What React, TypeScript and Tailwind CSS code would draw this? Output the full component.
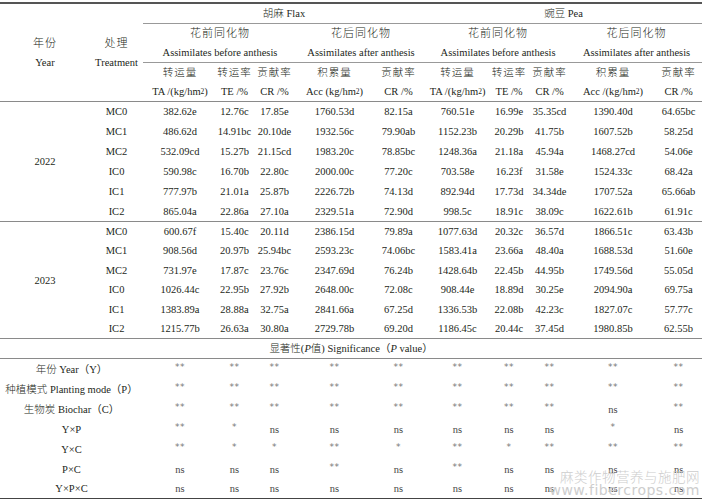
import React from "react";

const font = { fontFamily: '"Liberation Serif", "Noto Sans CJK SC", serif' };

type Row = [string, string, string, string, string, string, string, string, string, string];

const y2022: [string, Row][] = [
  ["MC0", ["382.62e", "12.76c", "17.85e", "1760.53d", "82.15a", "760.51e", "16.99e", "35.35cd", "1390.40d", "64.65bc"]],
  ["MC1", ["486.62d", "14.91bc", "20.10de", "1932.56c", "79.90ab", "1152.23b", "20.29b", "41.75b", "1607.52b", "58.25d"]],
  ["MC2", ["532.09cd", "15.27b", "21.15cd", "1983.20c", "78.85bc", "1248.36a", "21.18a", "45.94a", "1468.27cd", "54.06e"]],
  ["IC0", ["590.98c", "16.70b", "22.80c", "2000.00c", "77.20c", "703.58e", "16.23f", "31.58e", "1524.33c", "68.42a"]],
  ["IC1", ["777.97b", "21.01a", "25.87b", "2226.72b", "74.13d", "892.94d", "17.73d", "34.34de", "1707.52a", "65.66ab"]],
  ["IC2", ["865.04a", "22.86a", "27.10a", "2329.51a", "72.90d", "998.5c", "18.91c", "38.09c", "1622.61b", "61.91c"]],
];

const y2023: [string, Row][] = [
  ["MC0", ["600.67f", "15.40c", "20.11d", "2386.15d", "79.89a", "1077.63d", "20.32c", "36.57d", "1866.51c", "63.43b"]],
  ["MC1", ["908.56d", "20.97b", "25.94bc", "2593.23c", "74.06bc", "1583.41a", "23.66a", "48.40a", "1688.53d", "51.60e"]],
  ["MC2", ["731.97e", "17.87c", "23.76c", "2347.69d", "76.24b", "1428.64b", "22.45b", "44.95b", "1749.56d", "55.05d"]],
  ["IC0", ["1026.44c", "22.95b", "27.92b", "2648.00c", "72.08c", "908.44e", "18.89d", "30.25e", "2094.90a", "69.75a"]],
  ["IC1", ["1383.89a", "28.88a", "32.75a", "2841.66a", "67.25d", "1336.53b", "22.08b", "42.23c", "1827.07c", "57.77c"]],
  ["IC2", ["1215.77b", "26.63a", "30.80a", "2729.78b", "69.20d", "1186.45c", "20.44c", "37.45d", "1980.85b", "62.55b"]],
];

const sig: [string, string, string[]][] = [
  ["年份", " Year（Y）", ["**", "**", "**", "**", "**", "**", "**", "**", "**", "**"]],
  ["种植模式", " Planting mode（P）", ["**", "**", "**", "**", "**", "**", "**", "**", "**", "**"]],
  ["生物炭", " Biochar（C）", ["**", "**", "**", "**", "**", "**", "**", "**", "ns", "**"]],
  ["", "Y×P", ["**", "*", "ns", "ns", "ns", "ns", "ns", "ns", "*", "ns"]],
  ["", "Y×C", ["**", "*", "*", "**", "*", "**", "*", "**", "**", "**"]],
  ["", "P×C", ["ns", "ns", "ns", "**", "ns", "**", "ns", "ns", "ns", "ns"]],
  ["", "Y×P×C", ["ns", "ns", "ns", "ns", "ns", "ns", "ns", "ns", "ns", "ns"]],
];

const widths = [90, 53, 74, 35, 45, 75, 53, 65, 38, 43, 84, 47];

function Sup() {
  return <sup className="text-[7.5px] relative -top-[1px]">2</sup>;
}

function Zh({ children, cls = "" }: { children: React.ReactNode; cls?: string }) {
  return <span className={`font-light ${cls}`}>{children}</span>;
}

function DataBlock({ year, rows, h }: { year: string; rows: [string, Row][]; h: string }) {
  return (
    <>
      {rows.map(([t, vals], i) => (
        <tr key={t} className={`${h} ${i === rows.length - 1 ? "border-b-[1.5px] border-[#8a8a8a]" : ""}`}>
          {i === 0 && (
            <td rowSpan={rows.length} className="text-center align-middle p-0">
              {year}
            </td>
          )}
          <td className="text-center p-0">{t}</td>
          {vals.map((v, j) => (
            <td key={j} className="text-center p-0 whitespace-nowrap">
              {v}
            </td>
          ))}
        </tr>
      ))}
    </>
  );
}

export default function App() {
  return (
    <div className="relative w-[702px] h-[499px] bg-white overflow-hidden text-[#231f20]" style={font}>
      <div className="h-[2px]" />
      <table className="w-[702px] border-collapse table-fixed text-[10.5px] leading-[19px]">
        <colgroup>
          {widths.map((w, i) => (
            <col key={i} style={{ width: w }} />
          ))}
        </colgroup>
        <tbody>
          <tr className="h-[20px] border-t-[2px] border-[#555]">
            <td rowSpan={3} className="p-0 text-center align-middle leading-[19px] border-b-[1.5px] border-[#8a8a8a]">
              <div className="text-[11px] tracking-[1px]"><Zh>年份</Zh></div>
              <div>Year</div>
            </td>
            <td rowSpan={3} className="p-0 text-center align-middle leading-[19px] border-b-[1.5px] border-[#8a8a8a]">
              <div className="text-[11px] tracking-[1px]"><Zh>处理</Zh></div>
              <div>Treatment</div>
            </td>
            <td colSpan={5} className="p-0 text-center border-b border-[#999]">
              <Zh cls="text-[10.5px]">胡麻</Zh> Flax
            </td>
            <td colSpan={5} className="p-0 text-center border-b border-[#999]">
              <Zh cls="text-[10.5px]">豌豆</Zh> Pea
            </td>
          </tr>
          <tr className="h-[38px]">
            {[3, 2, 3, 2].map((span, i) => (
              <td key={i} colSpan={span} className="p-0 text-center border-b border-[#999] leading-[19px]">
                <div className="text-[11px] tracking-[1px]">
                  <Zh>{i % 2 === 0 ? "花前同化物" : "花后同化物"}</Zh>
                </div>
                <div>{i % 2 === 0 ? "Assimilates before anthesis" : "Assimilates after anthesis"}</div>
              </td>
            ))}
          </tr>
          <tr className="h-[38px] border-b-[1.5px] border-[#8a8a8a]">
            {[
              ["转运量", <>TA /(kg/hm<Sup />)</>],
              ["转运率", <>TE /%</>],
              ["贡献率", <>CR /%</>],
              ["积累量", <>Acc (kg/hm<Sup />)</>],
              ["贡献率", <>CR /%</>],
              ["转运量", <>TA /(kg/hm<Sup />)</>],
              ["转运率", <>TE /%</>],
              ["贡献率", <>CR /%</>],
              ["积累量", <>Acc /(kg/hm<Sup />)</>],
              ["贡献率", <>CR /%</>],
            ].map(([zh, en], i) => (
              <td key={i} className="p-0 text-center leading-[19px] whitespace-nowrap">
                <div className="text-[10.5px] tracking-[1px]">
                  <Zh>{zh}</Zh>
                </div>
                <div>{en}</div>
              </td>
            ))}
          </tr>
          <DataBlock year="2022" rows={y2022} h="h-[20px]" />
          <DataBlock year="2023" rows={y2023} h="h-[19.5px]" />
          <tr className="h-[20px] border-b-[1.5px] border-[#8a8a8a]">
            <td colSpan={12} className="p-0 text-center">
              <Zh cls="text-[10.5px]">显著性(</Zh>
              <i>P</i>
              <Zh cls="text-[10.5px]">值)</Zh> Significance（<i>P</i> value）
            </td>
          </tr>
          {sig.map(([zh, en, vals], i) => (
            <tr key={en} className={`h-[20px] ${i === sig.length - 1 ? "border-b-[2px] border-[#444]" : ""}`}>
              <td colSpan={2} className="p-0 text-center whitespace-nowrap">
                {zh && <Zh cls="text-[10.5px]">{zh}</Zh>}
                {en}
              </td>
              {vals.map((v, j) => (
                <td key={j} className="p-0 text-center">
                  {v === "ns" ? (
                    <span className="text-[#444]">ns</span>
                  ) : (
                    <span
                      className="relative -top-[2px] text-[#777] text-[9px] tracking-[0.5px]"
                      style={{ fontFamily: '"DejaVu Sans", sans-serif' }}
                    >
                      {v}
                    </span>
                  )}
                </td>
              ))}
            </tr>
          ))}
        </tbody>
      </table>
      <div
        className="absolute right-[2px] bottom-[2px] text-right text-[#cdcdcd] leading-[14px] pointer-events-none"
        style={{ fontFamily: '"Noto Sans CJK SC", "DejaVu Sans", sans-serif' }}
      >
        <div className="text-[13.5px] font-light tracking-[0.5px]">麻类作物营养与施肥网</div>
        <div className="text-[14px] tracking-[0.5px]" style={{ fontFamily: '"DejaVu Sans", sans-serif' }}>
          www.fibercrops.com
        </div>
      </div>
    </div>
  );
}
